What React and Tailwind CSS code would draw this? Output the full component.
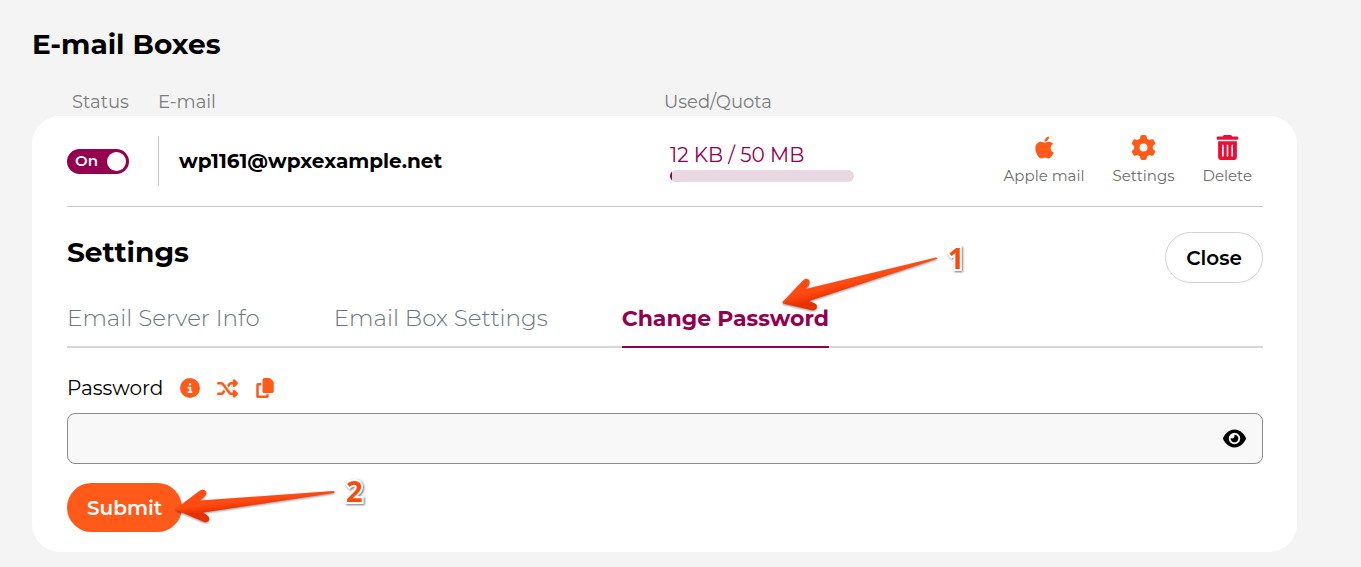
// App.jsx — E-mail box list with the password tab opened
import { useState } from 'react'
import { FaApple, FaCircleInfo, FaCopy, FaEye, FaGear, FaShuffle, FaTrashCan } from 'react-icons/fa6'

const TABS = ['Email Server Info', 'Email Box Settings', 'Change Password']

const ACTIONS = [
  { label: 'Apple mail', icon: <FaApple size={25} />, color: 'text-[#ff5a1a]' },
  { label: 'Settings', icon: <FaGear size={25} />, color: 'text-[#ff5a1a]' },
  { label: 'Delete', icon: <FaTrashCan size={25} />, color: 'text-[#ef0d33]' },
]

function StatusSwitch() {
  const [on, setOn] = useState(true)
  return (
    <label className="relative flex h-[25px] w-[62px] cursor-pointer items-center justify-between rounded-full bg-[#94004f] pr-[3px] pl-2">
      <input
        type="checkbox"
        role="switch"
        aria-label="Status"
        checked={on}
        onChange={() => setOn(!on)}
        className="absolute inset-0 cursor-pointer appearance-none"
      />
      <span className="text-[15px] font-semibold text-white">{on ? 'On' : 'Off'}</span>
      <span className="size-[19px] rounded-full bg-white" />
    </label>
  )
}

function StepNumber({ children, className }) {
  return (
    <span
      className={`pointer-events-none absolute font-['Open_Sans',sans-serif] text-[29px] leading-8 font-bold text-[#fc4a0f] drop-shadow-[1px_1px_1px_rgba(0,0,0,0.55)] [-webkit-text-stroke:4px_white] [paint-order:stroke_fill] ${className}`}
    >
      {children}
    </span>
  )
}

function ArrowOne() {
  return (
    <svg
      className="pointer-events-none absolute -top-[44px] left-[160px] drop-shadow-[0_1px_1px_rgba(0,0,0,0.45)]"
      width="158"
      height="56"
      viewBox="0 0 158 56"
      aria-hidden="true"
    >
      <defs>
        <linearGradient id="arrow-one" x1="60" y1="20" x2="66" y2="44" gradientUnits="userSpaceOnUse">
          <stop offset="0.35" stopColor="#ff4b12" />
          <stop offset="0.75" stopColor="#e93000" />
        </linearGradient>
      </defs>
      <path
        d="M0.5 47 L21 25.5 Q24 22.5 27 25 Q28.500 27 27 30 L23.500 34 L154 2.500 Q156 3 154.500 4 L27 46 L33 48.500 Q36 50.500 34.500 53.500 Q33 56 29 55 L1 48.500 Z"
        fill="url(#arrow-one)"
      />
    </svg>
  )
}

function ArrowTwo() {
  return (
    <svg
      className="pointer-events-none absolute top-1 left-[108px] drop-shadow-[0_1px_1px_rgba(0,0,0,0.45)]"
      width="164"
      height="40"
      viewBox="0 0 164 40"
      aria-hidden="true"
    >
      <defs>
        <linearGradient id="arrow-two" x1="60" y1="8" x2="62" y2="27" gradientUnits="userSpaceOnUse">
          <stop offset="0.35" stopColor="#ff4b12" />
          <stop offset="0.75" stopColor="#e93000" />
        </linearGradient>
      </defs>
      <path
        d="M0.500 22 L25 3.500 Q29 1.500 31 4.500 Q32 7.500 29.500 9.500 L25 13.500 L158.500 4 Q161 5 158.500 6 L28 25.500 L32.500 28.500 Q35.500 31 33.500 34 Q31.500 36 28 34.500 L1 23 Z"
        fill="url(#arrow-two)"
      />
    </svg>
  )
}

export default function App() {
  const [tab, setTab] = useState('Change Password')
  const [password, setPassword] = useState('')
  const [visible, setVisible] = useState(false)

  return (
    <main className="min-h-screen bg-[#f4f4f4] pt-7 pr-16 pb-4 pl-8 font-[Montserrat,Inter,sans-serif] text-black">
      <h1 className="text-[28px] leading-8 font-bold">E-mail Boxes</h1>

      <table className="mt-7 w-full table-fixed text-left">
        <colgroup>
          <col className="w-[126px]" />
          <col className="w-2/5" />
          <col />
          <col className="w-[340px]" />
        </colgroup>
        <thead>
          <tr className="h-7 text-[18px] leading-[26px] text-[#7c7c7c]">
            <th className="pl-10 font-normal">Status</th>
            <th className="font-normal">E-mail</th>
            <th className="font-normal">Used/Quota</th>
            <th aria-label="Actions" />
          </tr>
        </thead>
        <tbody>
          <tr className="h-[90px]">
            <td className="rounded-tl-[28px] bg-white pl-[35px]">
              <StatusSwitch />
            </td>
            <td className="bg-white">
              <div className="flex h-[50px] items-center border-l border-[#c8c8c8] pl-5 text-xl font-bold">
                wp1161@wpxexample.net
              </div>
            </td>
            <td className="bg-white pl-1.5">
              <p className="text-xl leading-[30px] text-[#94004f]">12 KB / 50 MB</p>
              <div className="h-3 w-[184px] overflow-hidden rounded-full bg-[#e9d7e2]">
                <div className="h-full w-0.5 bg-[#94004f]" />
              </div>
            </td>
            <td className="rounded-tr-[28px] bg-white pr-[45px]">
              <div className="flex justify-end gap-7">
                {ACTIONS.map(({ label, icon, color }) => (
                  <button key={label} className="flex flex-col items-center gap-1 text-[15px] leading-6 text-[#6c6c6c]">
                    <span className={`flex h-[26px] items-center ${color}`}>{icon}</span>
                    {label}
                  </button>
                ))}
              </div>
            </td>
          </tr>
        </tbody>
      </table>

      <section className="rounded-b-[28px] bg-white pr-[34px] pb-5 pl-[35px]">
        <div className="flex items-start justify-between border-t border-[#c8c8c8] pt-[25px]">
          <h2 className="text-[28px] leading-10 font-bold">Settings</h2>
          <button className="h-[51px] rounded-full border border-[#cfd2da] px-5 text-xl font-semibold">Close</button>
        </div>

        <div role="tablist" className="mt-4 flex gap-[74px] border-b-2 border-[#d6d6d6]">
          {TABS.map((name) => (
            <button
              key={name}
              role="tab"
              aria-selected={tab === name}
              onClick={() => setTab(name)}
              className={
                tab === name
                  ? 'relative -mb-0.5 border-b-2 border-[#94004f] pb-2 text-[22px] leading-[39px] font-bold text-[#94004f]'
                  : 'pb-2 text-[23px] leading-[39px] font-light text-[#6c757d]'
              }
            >
              {name}
              {name === 'Change Password' && (
                <>
                  <ArrowOne />
                  <StepNumber className="-top-[57px] left-[326px]">1</StepNumber>
                </>
              )}
            </button>
          ))}
        </div>

        <form onSubmit={(e) => e.preventDefault()}>
          <div className="mt-6 flex items-center gap-[17px] text-[#ff5a1a]">
            <label htmlFor="password" className="text-xl leading-8 text-black">Password</label>
            <button type="button" aria-label="Password rules"><FaCircleInfo size={20} /></button>
            <button type="button" aria-label="Generate password"><FaShuffle size={21} /></button>
            <button type="button" aria-label="Copy password"><FaCopy size={20} /></button>
          </div>

          <div className="mt-[9px] flex h-[51px] items-center rounded-lg border border-[#8b8b8b] bg-[#f8f8f8] pr-4">
            <input
              id="password"
              type={visible ? 'text' : 'password'}
              value={password}
              onChange={(e) => setPassword(e.target.value)}
              className="h-full min-w-0 flex-1 bg-transparent px-4 text-xl outline-none"
            />
            <button type="button" aria-label="Show password" onClick={() => setVisible(!visible)}>
              <FaEye size={23} />
            </button>
          </div>

          <div className="relative mt-[19px] w-fit">
            <button type="submit" className="h-[49px] rounded-full bg-[#ff5a1a] px-5 text-xl font-semibold text-white">
              Submit
            </button>
            <ArrowTwo />
            <StepNumber className="-top-2 left-[279px]">2</StepNumber>
          </div>
        </form>
      </section>
    </main>
  )
}
